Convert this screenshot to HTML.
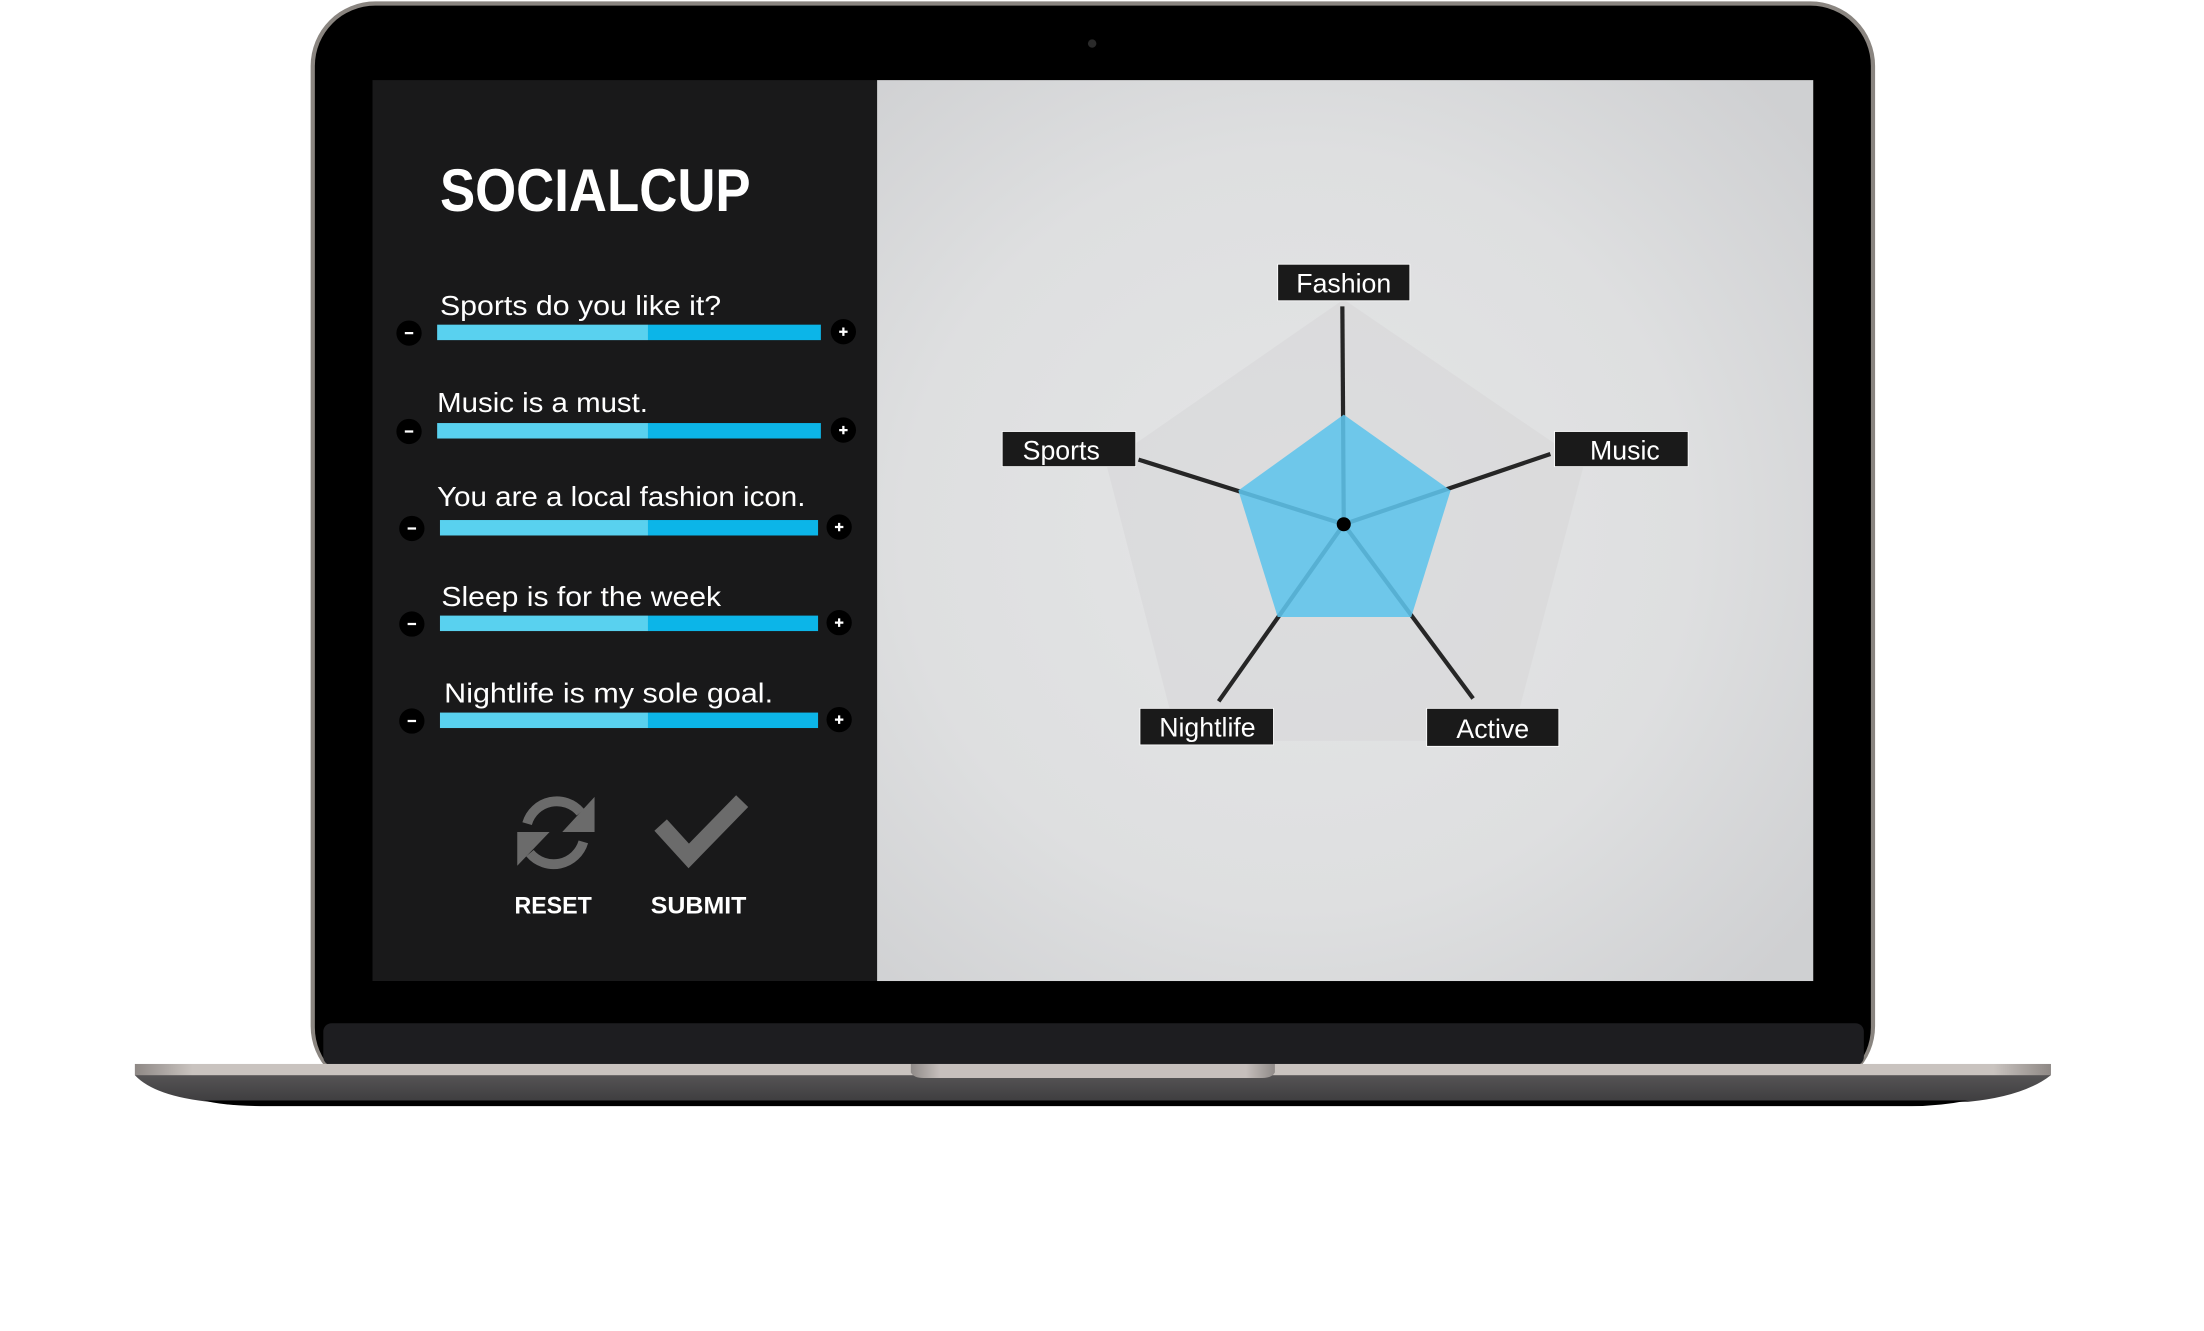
<!DOCTYPE html>
<html><head><meta charset="utf-8"><style>
html,body{margin:0;padding:0;background:#fff;width:2204px;height:1331px;overflow:hidden}
svg{display:block}
text{font-family:"Liberation Sans",sans-serif}
</style></head><body>
<svg width="2204" height="1331" viewBox="0 0 1568 947" preserveAspectRatio="none" xmlns="http://www.w3.org/2000/svg">
<defs>
<radialGradient id="bg" cx="0.45" cy="0.5" r="0.7">
<stop offset="0" stop-color="#e4e5e6"/><stop offset="0.6" stop-color="#dedfe0"/><stop offset="1" stop-color="#cfd0d2"/>
</radialGradient>
<linearGradient id="base" x1="0" y1="0" x2="0" y2="1">
<stop offset="0" stop-color="#5f5d5e"/><stop offset="1" stop-color="#3e3d3f"/>
</linearGradient>
<linearGradient id="silver" x1="0" y1="0" x2="1" y2="0">
<stop offset="0" stop-color="#8e8885"/><stop offset="0.03" stop-color="#c9c3bf"/><stop offset="0.97" stop-color="#c9c3bf"/><stop offset="1" stop-color="#8e8885"/>
</linearGradient>
<linearGradient id="notch" x1="0" y1="0" x2="1" y2="0">
<stop offset="0" stop-color="#8f8a88"/><stop offset="0.08" stop-color="#c6bfbc"/><stop offset="0.92" stop-color="#c6bfbc"/><stop offset="1" stop-color="#8f8a88"/>
</linearGradient>
</defs>
<rect x="221" y="1" width="1113" height="775" rx="46" fill="#8a8580"/>
<rect x="224" y="4" width="1107" height="770" rx="43" fill="#000"/>
<rect x="230" y="728" width="1096" height="30" rx="6" fill="#1d1d20"/>
<circle cx="777" cy="31" r="3" fill="#2a2a2a"/>
<rect x="265" y="57" width="359" height="641" fill="#19191a"/>
<rect x="624" y="57" width="666" height="641" fill="url(#bg)"/>
<path d="M96 757 H1459 V765 Q1440 780 1400 784 H150 Q110 780 96 765 Z" fill="url(#base)"/>
<rect x="96" y="757" width="1363" height="8" fill="url(#silver)"/>
<path d="M648 757 H907 V763 Q905 767 898 767 H657 Q650 767 648 763 Z" fill="url(#notch)"/>
<path d="M145 783 H1400 Q1380 787 1360 787 H190 Q160 787 145 783 Z" fill="#000"/>
<text x="313" y="150" font-size="43" font-weight="bold" fill="#fff" textLength="221" lengthAdjust="spacingAndGlyphs">SOCIALCUP</text>
<g font-size="20" fill="#fff">
<text x="313" y="224" textLength="200" lengthAdjust="spacingAndGlyphs">Sports do you like it?</text>
<text x="311" y="293" textLength="150" lengthAdjust="spacingAndGlyphs">Music is a must.</text>
<text x="311" y="360" textLength="262" lengthAdjust="spacingAndGlyphs">You are a local fashion icon.</text>
<text x="314" y="431" textLength="199" lengthAdjust="spacingAndGlyphs">Sleep is for the week</text>
<text x="316" y="500" textLength="234" lengthAdjust="spacingAndGlyphs">Nightlife is my sole goal.</text>
</g>
<g>
<rect x="311" y="231" width="150" height="11" fill="#59d1ef"/><rect x="461" y="231" width="123" height="11" fill="#0cb5e8"/>
<rect x="311" y="301" width="150" height="11" fill="#59d1ef"/><rect x="461" y="301" width="123" height="11" fill="#0cb5e8"/>
<rect x="313" y="370" width="148" height="11" fill="#59d1ef"/><rect x="461" y="370" width="121" height="11" fill="#0cb5e8"/>
<rect x="313" y="438" width="148" height="11" fill="#59d1ef"/><rect x="461" y="438" width="121" height="11" fill="#0cb5e8"/>
<rect x="313" y="507" width="148" height="11" fill="#59d1ef"/><rect x="461" y="507" width="121" height="11" fill="#0cb5e8"/>
</g>
<g fill="#000">
<circle cx="291" cy="237" r="9"/><circle cx="600" cy="236" r="9"/>
<circle cx="291" cy="307" r="9"/><circle cx="600" cy="306" r="9"/>
<circle cx="293" cy="376" r="9"/><circle cx="597" cy="375" r="9"/>
<circle cx="293" cy="444" r="9"/><circle cx="597" cy="443" r="9"/>
<circle cx="293" cy="513" r="9"/><circle cx="597" cy="512" r="9"/>
</g>
<g stroke="#fff" stroke-width="1.6">
<path d="M288 237h6M288 307h6M290 376h6M290 444h6M290 513h6"/>
<path d="M597 236h6M600 233v6M597 306h6M600 303v6M594 375h6M597 372v6M594 443h6M597 440v6M594 512h6M597 509v6"/>
</g>
<g fill="none" stroke="#6b6b6b" stroke-width="7">
<path d="M375 586 A22 22 0 0 1 413 578"/>
<path d="M415 599 A22 22 0 0 1 377 607"/>
</g>
<path d="M423 567 V592 H400 Z" fill="#6b6b6b"/>
<path d="M368 616 V592 H391 Z" fill="#6b6b6b"/>
<path d="M470 587 L490 609 L528 570" fill="none" stroke="#6b6b6b" stroke-width="12"/>
<text x="366" y="650" font-size="17" font-weight="bold" fill="#fff" textLength="55" lengthAdjust="spacingAndGlyphs">RESET</text>
<text x="463" y="650" font-size="17" font-weight="bold" fill="#fff" textLength="68" lengthAdjust="spacingAndGlyphs">SUBMIT</text>
<polygon points="956,213 1127,330 1075,527 838,527 787,330" fill="#d9dadb" opacity="0.8"/>
<g stroke="#262626" stroke-width="3">
<line x1="956" y1="373" x2="955" y2="218"/>
<line x1="956" y1="373" x2="1103" y2="323"/>
<line x1="956" y1="373" x2="1048" y2="497"/>
<line x1="956" y1="373" x2="867" y2="499"/>
<line x1="956" y1="373" x2="810" y2="327"/>
</g>
<polygon points="956,295 1032,349 1004,439 909,439 881,349" fill="#5ec4ec" opacity="0.88"/>
<circle cx="956" cy="373" r="5" fill="#000"/>
<g fill="#1a1a1a" stroke="#fff" stroke-width="0.6">
<rect x="909" y="188" width="94" height="26"/>
<rect x="713" y="307" width="95" height="25"/>
<rect x="1106" y="307" width="95" height="25"/>
<rect x="811" y="504" width="95" height="26"/>
<rect x="1015" y="504" width="94" height="27"/>
</g>
<g font-size="19" fill="#fff" text-anchor="middle">
<text x="956" y="208">Fashion</text>
<text x="755" y="327">Sports</text>
<text x="1156" y="327">Music</text>
<text x="859" y="524">Nightlife</text>
<text x="1062" y="525">Active</text>
</g>
</svg>
</body></html>
